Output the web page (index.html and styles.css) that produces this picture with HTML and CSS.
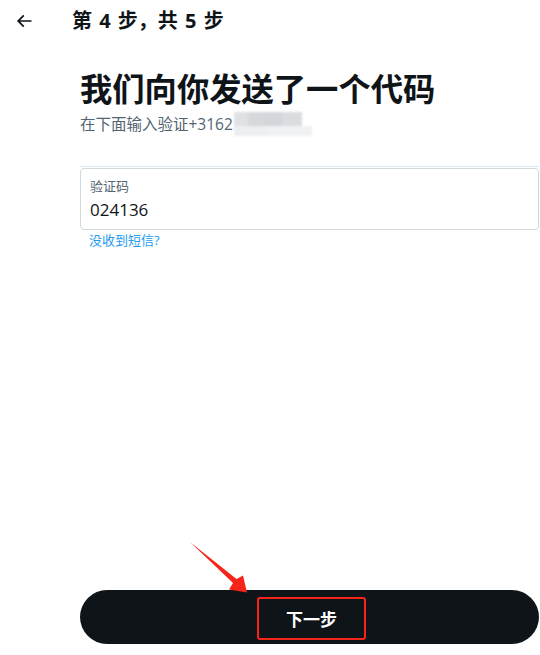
FILE: index.html
```html
<!DOCTYPE html>
<html lang="zh-CN">
<head>
<meta charset="utf-8">
<title>第 4 步，共 5 步</title>
<link rel="stylesheet" href="styles.css">
</head>
<body>
<div class="page">
  <header class="topbar">
    <button class="back" aria-label="返回">
      <svg viewBox="0 0 24 24" width="20" height="20"><path d="M7.414 13l5.043 5.04-1.414 1.42L3.586 12l7.457-7.46 1.414 1.42L7.414 11H21v2H7.414z"/></svg>
    </button>
    <h2 class="step">第 4 步，共 5 步</h2>
  </header>
  <main class="main">
    <h1 class="title">我们向你发送了一个代码</h1>
    <p class="subtitle">在下面输入验证+3162<span class="masked"><span class="m-top"></span><span class="m-bot"></span></span></p>
    <div class="field-wrap">
      <label class="field">
        <span class="field-label">验证码</span>
        <span class="field-value">024136</span>
      </label>
    </div>
    <a class="link" href="#">没收到短信?</a>
    <div class="spacer"></div>
    <button class="next"><span class="next-text">下一步</span></button>
  </main>
  <svg class="annot-arrow" width="540" height="655" viewBox="0 0 540 655">
    <polygon points="190,542 236.5,579 243,575.5 247,592.5 229,589.5 233,583" fill="#f6251a"/>
  </svg>
</div>
</body>
</html>
```
FILE: styles.css
```css
* { box-sizing: border-box; }
html, body { margin: 0; padding: 0; background: #fff; }
body {
  font-family: "Open Sans", "Noto Sans CJK SC", sans-serif;
  color: #0f1419;
}
.page {
  position: relative;
  width: 540px;
  height: 655px;
  display: flex;
  flex-direction: column;
  overflow: hidden;
}
.topbar {
  height: 42px;
  display: flex;
  align-items: center;
  padding-left: 14px;
  flex: none;
}
.back {
  width: 20px;
  height: 20px;
  padding: 0;
  border: 0;
  background: none;
  display: flex;
}
.back svg { fill: #0f1419; }
.step {
  margin: 0 0 0 38px;
  font-size: 20px;
  font-weight: 700;
  line-height: 24px;
  word-spacing: 2px;
}
.main {
  flex: 1;
  display: flex;
  flex-direction: column;
  padding: 0 1px 11px 80px;
}
.title {
  margin: 26px 0 0;
  font-size: 32.3px;
  line-height: 40px;
  font-weight: 700;
}
.subtitle {
  margin: 4px 0 0;
  font-size: 15.5px;
  line-height: 20px;
  color: #536471;
  display: flex;
  align-items: center;
}
.masked {
  display: inline-flex;
  flex-direction: column;
  margin-left: 1px;
  filter: blur(0.8px);
}
.m-top {
  width: 68px;
  height: 14px;
  background: linear-gradient(90deg, #dfe1e4 0 20%, #d6d9dc 20% 45%, #d3d6da 45% 70%, #dadde0 70%);
}
.m-bot {
  width: 78px;
  height: 10px;
  background: linear-gradient(90deg, #eceef0 0 40%, #f0f1f3 40%);
}
.field-wrap {
  margin-top: 30px;
  border-top: 1px solid #d4eaf7;
  padding-top: 1px;
}
.field {
  display: flex;
  flex-direction: column;
  border: 1px solid #cfd9de;
  border-radius: 4px;
  padding: 9px 9px 7px;
}
.field-label {
  font-size: 13px;
  line-height: 16px;
  color: #536471;
}
.field-value {
  margin-top: 4px;
  font-size: 17px;
  line-height: 24px;
  color: #0f1419;
}
.link {
  margin: 2px 0 0 9px;
  font-size: 13px;
  line-height: 16px;
  color: #1d9bf0;
  text-decoration: none;
  align-self: flex-start;
}
.spacer { flex: 1; }
.next {
  height: 54px;
  border: 0;
  border-radius: 27px;
  background: #0f1419;
  display: flex;
  align-items: center;
  justify-content: center;
  padding: 0;
  font-family: "Open Sans", "Noto Sans CJK SC", sans-serif;
}
.next-text {
  display: inline-flex;
  align-items: center;
  justify-content: center;
  width: 109px;
  height: 43px;
  border: 2.5px solid #f6251a;
  border-radius: 3px;
  color: #fff;
  font-size: 17px;
  font-weight: 700;
  margin-left: 4px;
  margin-top: 2px;
}
.annot-arrow {
  position: absolute;
  left: 0;
  top: 0;
  pointer-events: none;
}
```
